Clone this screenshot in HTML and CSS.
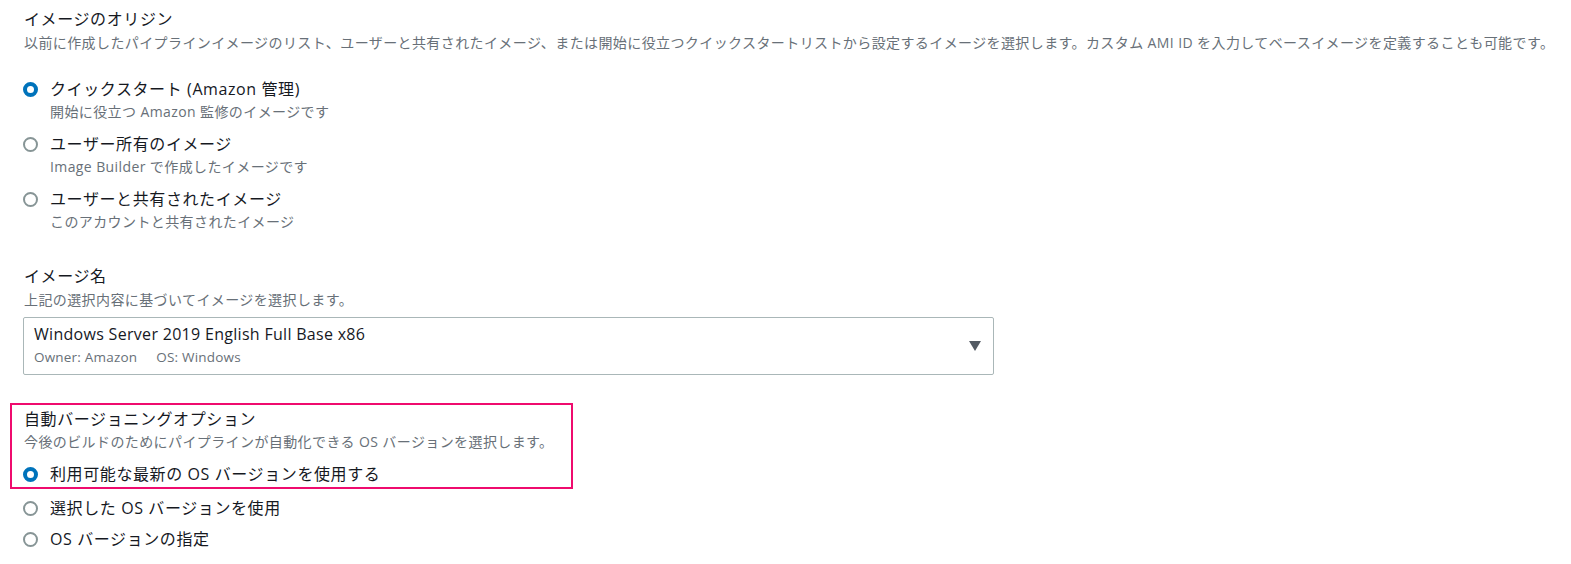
FILE: index.html
```html
<!DOCTYPE html>
<html lang="ja">
<head>
<meta charset="utf-8">
<link rel="stylesheet" href="styles.css">
</head>
<body>
<div class="page">
  <section class="field">
    <div class="label">イメージのオリジン</div>
    <div class="desc">以前に作成したパイプラインイメージのリスト、ユーザーと共有されたイメージ、または開始に役立つクイックスタートリストから設定するイメージを選択します。カスタム AMI ID を入力してベースイメージを定義することも可能です。</div>
    <div class="radios origin">
      <div class="radio-item">
        <div class="radio-row"><span class="radio checked"></span><span class="radio-label">クイックスタート (Amazon 管理)</span></div>
        <div class="radio-sub">開始に役立つ Amazon 監修のイメージです</div>
      </div>
      <div class="radio-item">
        <div class="radio-row"><span class="radio"></span><span class="radio-label">ユーザー所有のイメージ</span></div>
        <div class="radio-sub">Image Builder で作成したイメージです</div>
      </div>
      <div class="radio-item">
        <div class="radio-row"><span class="radio"></span><span class="radio-label">ユーザーと共有されたイメージ</span></div>
        <div class="radio-sub">このアカウントと共有されたイメージ</div>
      </div>
    </div>
  </section>

  <section class="field name-field">
    <div class="label">イメージ名</div>
    <div class="desc">上記の選択内容に基づいてイメージを選択します。</div>
    <div class="select">
      <div class="select-text">
        <div class="select-main">Windows Server 2019 English Full Base x86</div>
        <div class="select-tags"><span>Owner: Amazon</span><span>OS: Windows</span></div>
      </div>
      <span class="caret"></span>
    </div>
  </section>

  <section class="versioning">
    <div class="highlight">
      <div class="label">自動バージョニングオプション</div>
      <div class="desc">今後のビルドのためにパイプラインが自動化できる OS バージョンを選択します。</div>
      <div class="radio-row first"><span class="radio checked"></span><span class="radio-label">利用可能な最新の OS バージョンを使用する</span></div>
    </div>
    <div class="radio-row plain"><span class="radio"></span><span class="radio-label">選択した OS バージョンを使用</span></div>
    <div class="radio-row plain"><span class="radio"></span><span class="radio-label">OS バージョンの指定</span></div>
  </section>
</div>
</body>
</html>
```

FILE: styles.css
```css
html, body {
  margin: 0;
  padding: 0;
  background: #ffffff;
}
body {
  font-family: "Open Sans", "Noto Sans CJK JP", sans-serif;
  color: #16191f;
}
.page {
  padding: 8px 24px 0 24px;
}
.label {
  font-size: 16px;
  line-height: 22px;
  letter-spacing: 0.6px;
}
.desc {
  font-size: 14px;
  line-height: 20px;
  letter-spacing: 0.4px;
  color: #687078;
  margin-top: 3px;
  white-space: nowrap;
}
.radios.origin {
  margin-top: 24px;
  display: flex;
  flex-direction: column;
  gap: 9px;
}
.radio-row {
  display: flex;
  align-items: center;
  height: 24px;
}
.radio {
  box-sizing: border-box;
  width: 15px;
  height: 15px;
  border-radius: 50%;
  border: 2px solid #879596;
  margin-left: -1px;
  margin-right: 12px;
  flex: none;
  background: #fff;
}
.radio.checked {
  border: 4.5px solid #0073bb;
}
.radio-label {
  font-size: 16px;
  line-height: 24px;
  letter-spacing: 0.6px;
}
.radio-sub {
  padding-left: 26px;
  font-size: 14px;
  line-height: 22px;
  letter-spacing: 0.4px;
  color: #687078;
}
.name-field {
  margin-top: 32px;
}
.select {
  box-sizing: border-box;
  width: 971px;
  height: 58px;
  margin-top: 7px;
  margin-left: -1px;
  border: 1px solid #aab7b8;
  border-radius: 2px;
  padding: 5px 12px 0 10px;
  display: flex;
  justify-content: space-between;
  align-items: flex-start;
}
.select-main {
  font-size: 16px;
  line-height: 22px;
  letter-spacing: 0.3px;
}
.select-tags {
  margin-top: 3px;
  font-size: 13.5px;
  line-height: 18px;
  letter-spacing: 0.2px;
  color: #687078;
  display: flex;
  gap: 19px;
}
.caret {
  width: 0;
  height: 0;
  border-left: 6.5px solid transparent;
  border-right: 6.5px solid transparent;
  border-top: 10px solid #545b64;
  margin-top: 18px;
}
.versioning {
  margin-top: 28px;
}
.highlight {
  box-sizing: border-box;
  width: 563px;
  margin-left: -14px;
  border: 2px solid #ef0b6e;
  padding: 3px 12px 1px 12px;
}
.highlight .desc {
  margin-top: 2px;
}
.radio-row.first {
  margin-top: 10px;
}
.radio-row.plain {
  margin-top: 7px;
}
.versioning .radio-row.plain:first-of-type {
  margin-top: 5px;
}
```
